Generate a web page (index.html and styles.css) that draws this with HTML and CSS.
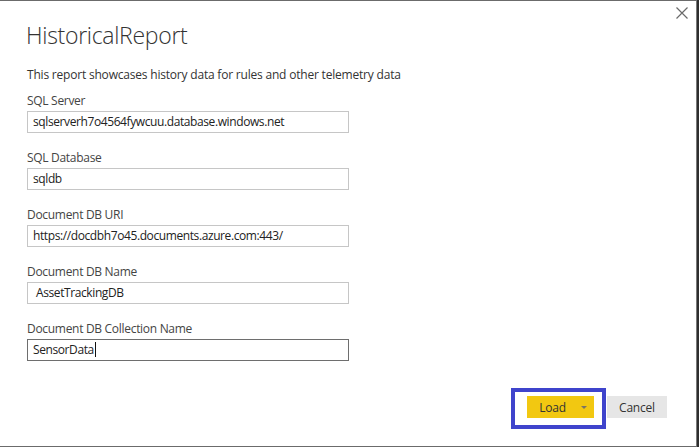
FILE: index.html
```html
<!DOCTYPE html>
<html lang="en">
<head>
<meta charset="utf-8">
<title>HistoricalReport</title>
<link rel="stylesheet" href="styles.css">
</head>
<body>
<div class="dialog">
  <button class="close" aria-label="Close">
    <svg width="12" height="12" viewBox="0 0 12 12"><path d="M0.5 0.5 L11.5 11.5 M11.5 0.5 L0.5 11.5" stroke="#6a6a6a" stroke-width="1.2" fill="none"/></svg>
  </button>
  <h1 class="title">HistoricalReport</h1>
  <p class="desc">This report showcases history data for rules and other telemetry data</p>
  <div class="fields">
    <div class="field">
      <div class="label">SQL Server</div>
      <div class="input">sqlserverh7o4564fywcuu.database.windows.net</div>
    </div>
    <div class="field">
      <div class="label">SQL Database</div>
      <div class="input">sqldb</div>
    </div>
    <div class="field">
      <div class="label">Document DB URI</div>
      <div class="input">https://docdbh7o45.documents.azure.com:443/</div>
    </div>
    <div class="field">
      <div class="label">Document DB Name</div>
      <div class="input indent">AssetTrackingDB</div>
    </div>
    <div class="field">
      <div class="label">Document DB Collection Name</div>
      <div class="input focused">SensorData<span class="caret"></span></div>
    </div>
  </div>
  <div class="actions">
    <div class="load-wrap">
      <button class="btn load"><span class="load-text">Load</span><span class="arrow"></span></button>
      <div class="highlight"></div>
    </div>
    <button class="btn cancel">Cancel</button>
  </div>
</div>
</body>
</html>
```
FILE: styles.css
```css
* { box-sizing: border-box; }
html, body { margin: 0; padding: 0; }
body {
  width: 699px;
  height: 447px;
  background: #2e2e2e;
  font-family: "Open Sans", "Noto Sans", sans-serif;
  overflow: hidden;
}
.dialog {
  position: relative;
  width: 697px;
  height: 447px;
  background: #ffffff;
  border-top: 1px solid #6b6b6b;
  border-right: 1px solid #7a7a7a;
  border-bottom: 1px solid #6b6b6b;
  padding: 18px 0 0 27px;
  display: flex;
  flex-direction: column;
}
.close {
  position: absolute;
  top: 6px;
  left: 676px;
  width: 12px;
  height: 12px;
  padding: 0;
  border: 0;
  background: none;
  display: block;
}
.close svg { display: block; }
.title {
  margin: 0 0 0 -1px;
  font-weight: 300;
  font-size: 23px;
  line-height: 32px;
  color: #333333;
  letter-spacing: -0.3px;
}
.desc {
  margin: 16px 0 0 0;
  font-size: 12px;
  line-height: 16px;
  color: #333333;
  letter-spacing: -0.2px;
}
.fields {
  margin-top: 10px;
  display: flex;
  flex-direction: column;
  gap: 17px;
}
.field {
  display: flex;
  flex-direction: column;
  gap: 2px;
}
.label {
  font-size: 12px;
  line-height: 16px;
  color: #444444;
  letter-spacing: -0.3px;
}
.input {
  width: 322px;
  height: 22px;
  border: 1px solid #c6c6c6;
  padding: 0 5px;
  font-size: 12px;
  line-height: 20px;
  color: #222222;
  white-space: nowrap;
  letter-spacing: -0.4px;
}
.input.indent { padding-left: 8px; }
.input.focused { border-color: #6e6e6e; }
.caret {
  display: inline-block;
  width: 1px;
  height: 15px;
  background: #111;
  vertical-align: -3px;
  margin-left: 1px;
}
.actions {
  margin-top: 35px;
  display: flex;
  justify-content: flex-end;
  gap: 13px;
  padding-right: 29px;
}
.load-wrap { position: relative; }
.btn {
  height: 22px;
  border: 0;
  padding: 0;
  font-family: inherit;
  font-size: 12px;
  color: #333333;
  display: flex;
  align-items: center;
  justify-content: center;
  letter-spacing: -0.2px;
}
.load {
  width: 67px;
  background: #f2c811;
  position: relative;
}
.load-text { margin-right: 16px; }
.arrow {
  position: absolute;
  left: 54px;
  top: 10px;
  width: 0;
  height: 0;
  border-left: 3px solid transparent;
  border-right: 3px solid transparent;
  border-top: 3px solid #7a7464;
}
.cancel {
  width: 60px;
  background: #e6e6e6;
}
.highlight {
  position: absolute;
  left: -16px;
  top: -8px;
  width: 95px;
  height: 41px;
  border: 4px solid #3f44cc;
  pointer-events: none;
}
```
